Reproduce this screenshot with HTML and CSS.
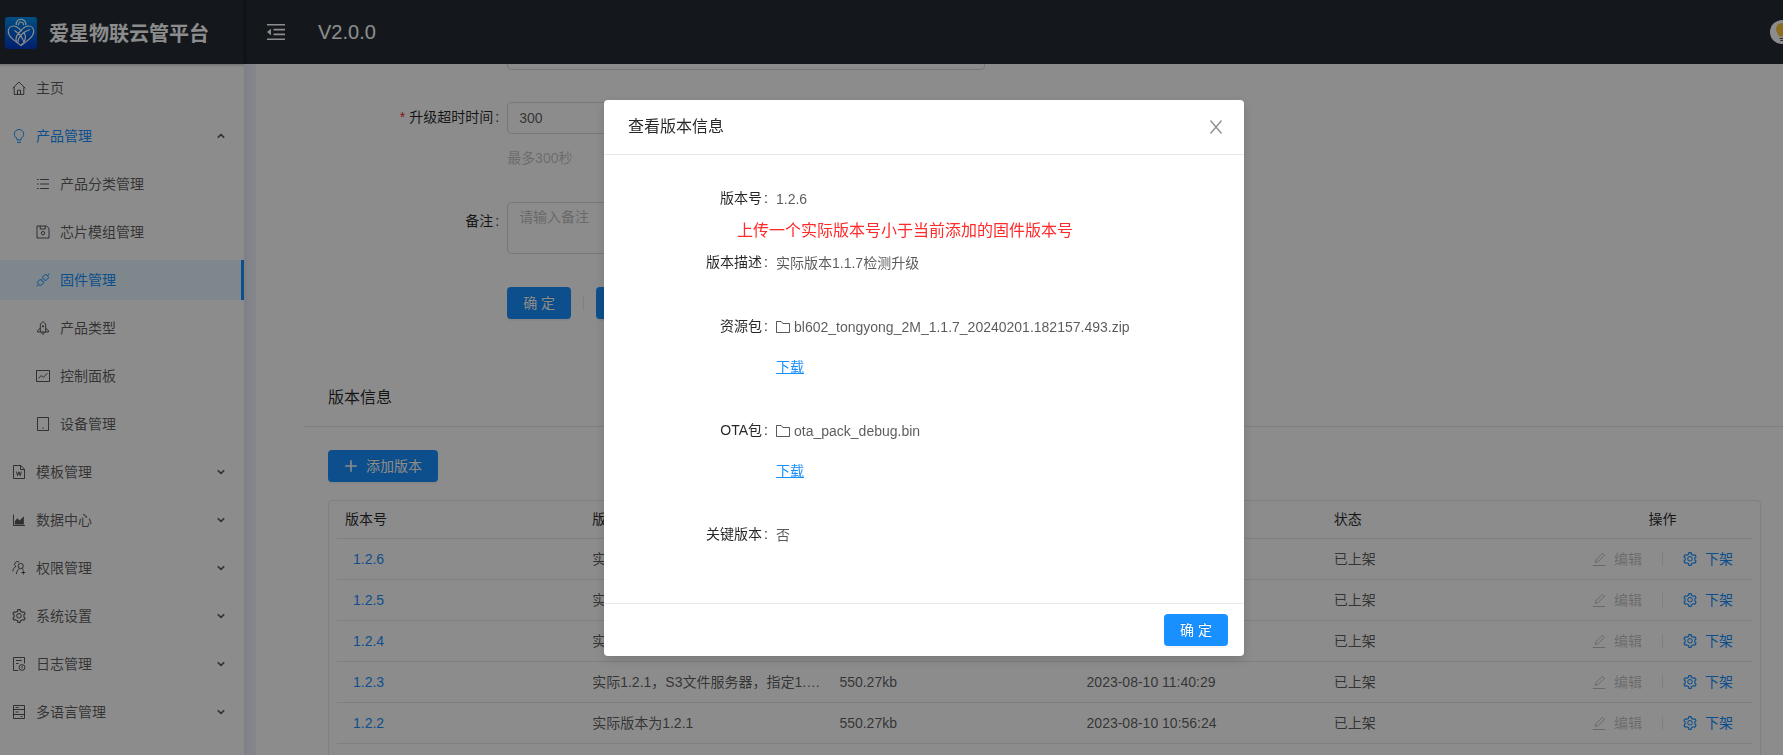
FILE: index.html
```html
<!DOCTYPE html>
<html lang="zh-CN">
<head>
<meta charset="utf-8">
<title>爱星物联云管平台</title>
<link rel="stylesheet" href="styles.css">
</head>
<body>
<svg class="sprite" aria-hidden="true">
  <symbol id="i-setting" viewBox="64 64 896 896"><path fill="currentColor" d="M924.8 625.7l-65.5-56c3.1-19 4.7-38.4 4.7-57.8s-1.6-38.8-4.7-57.8l65.5-56a32.03 32.03 0 0 0 9.3-35.2l-.9-2.6a443.74 443.74 0 0 0-79.7-137.9l-1.8-2.1a32.12 32.12 0 0 0-35.1-9.5l-81.3 28.9c-30-24.6-63.5-44-99.7-57.6l-15.7-85a32.05 32.05 0 0 0-25.8-25.7l-2.7-.5c-52.1-9.4-106.9-9.4-159 0l-2.7.5a32.05 32.05 0 0 0-25.8 25.7l-15.8 85.4a351.86 351.86 0 0 0-99 57.4l-81.9-29.1a32 32 0 0 0-35.1 9.5l-1.8 2.1a446.02 446.02 0 0 0-79.7 137.9l-.9 2.6c-4.5 12.5-.8 26.5 9.3 35.2l66.3 56.6c-3.1 18.8-4.6 38-4.6 57.1 0 19.2 1.5 38.4 4.6 57.1L99 625.5a32.03 32.03 0 0 0-9.3 35.2l.9 2.6c18.1 50.4 44.9 96.9 79.7 137.9l1.8 2.1a32.12 32.12 0 0 0 35.1 9.5l81.9-29.1c29.8 24.5 63.1 43.9 99 57.4l15.8 85.4a32.05 32.05 0 0 0 25.8 25.7l2.7.5a449.4 449.4 0 0 0 159 0l2.7-.5a32.05 32.05 0 0 0 25.8-25.7l15.7-85a350 350 0 0 0 99.7-57.6l81.3 28.9a32 32 0 0 0 35.1-9.5l1.8-2.1c34.8-41.1 61.6-87.5 79.7-137.9l.9-2.6c4.5-12.3.8-26.3-9.3-35zM788.3 465.9c2.5 15.1 3.8 30.6 3.8 46.1s-1.3 31-3.8 46.1l-6.6 40.1 74.7 63.9a370.03 370.03 0 0 1-42.6 73.6L721 702.8l-31.4 25.8c-23.9 19.6-50.5 35-79.3 45.8l-38.1 14.3-17.9 97a377.5 377.5 0 0 1-85 0l-17.9-97.2-37.8-14.5c-28.5-10.8-55-26.2-78.7-45.7l-31.4-25.9-93.4 33.2c-17-22.9-31.2-47.6-42.6-73.6l75.5-64.5-6.5-40c-2.4-14.9-3.7-30.3-3.7-45.5 0-15.3 1.2-30.6 3.7-45.5l6.5-40-75.5-64.5c11.3-26.1 25.6-50.7 42.6-73.6l93.4 33.2 31.4-25.9c23.7-19.5 50.2-34.9 78.7-45.7l37.9-14.3 17.9-97.2c28.1-3.2 56.8-3.2 85 0l17.9 97 38.1 14.3c28.7 10.8 55.4 26.2 79.3 45.8l31.4 25.8 92.8-32.9c17 22.9 31.2 47.6 42.6 73.6L781.8 426l6.5 39.9zM512 326c-97.2 0-176 78.8-176 176s78.8 176 176 176 176-78.8 176-176-78.8-176-176-176zm79.2 255.2A111.6 111.6 0 0 1 512 614c-29.9 0-58-11.7-79.2-32.8A111.6 111.6 0 0 1 400 502c0-29.9 11.7-58 32.8-79.2C454 401.6 482.1 390 512 390c29.9 0 58 11.6 79.2 32.8A111.6 111.6 0 0 1 624 502c0 29.9-11.7 58-32.8 79.2z"/></symbol>
  <symbol id="i-home" viewBox="0 0 14 14"><path class="ln" d="M.6 7.4 7 1l6.4 6.4M2.200 6.200v7.200h9.600V6.200M5.500 13.200V9.300h3v3.900"/></symbol>
  <symbol id="i-bulb" viewBox="0 0 14 14"><path class="ln" d="M5 11V9.400C3.400 8.600 2.300 7 2.300 5.200a4.700 4.700 0 0 1 9.400 0C11.700 7 10.600 8.600 9 9.400V11zM5 13.300h4"/></symbol>
  <symbol id="i-list" viewBox="0 0 14 14"><path class="ln" d="M4.200 2.500H13M4.200 7H13M4.200 11.500H13M1 2.500h1.600M1 7h1.600M1 11.500h1.600"/></symbol>
  <symbol id="i-save" viewBox="0 0 14 14"><path class="ln" d="M1 1h9.600L13 3.400V13H1zM4.200 1v3h5V1"/><circle class="ln" cx="7" cy="8.200" r="1.700"/></symbol>
  <symbol id="i-api" viewBox="0 0 14 14"><path class="ln" d="M6.300 4.200 8.300 2.200a2.500 2.500 0 0 1 3.500 3.500l-2 2zM4.200 6.300 2.200 8.300a2.500 2.500 0 0 0 3.500 3.500l2-2zM11.700 2.300l1.700-1.700M2.300 11.700l-1.700 1.700M5.200 7.200l1.500-1.500M6.800 8.800l1.500-1.500"/></symbol>
  <symbol id="i-rocket" viewBox="0 0 14 14"><path class="ln" d="M4.300 11V4.200C4.300 2.700 6 1.200 7 .6c1 .6 2.700 2.100 2.700 3.600V11zM4.300 7.200 1.600 9.500V11h2.700M9.700 7.200l2.700 2.300V11H9.700M5.600 11.200c0 1.200.8 1.900 1.400 2.200.6-.3 1.400-1 1.400-2.200"/><circle class="ln" cx="7" cy="5.300" r=".7"/></symbol>
  <symbol id="i-fund" viewBox="0 0 14 14"><path class="ln" d="M.5 1.500h13v11H.5zM2.500 9.500l2.700-3 2 2 4.200-4.300"/></symbol>
  <symbol id="i-tablet" viewBox="0 0 14 14"><path class="ln" d="M1.500.5h11v13h-11z"/><circle cx="7" cy="11.300" r=".7" fill="currentColor"/></symbol>
  <symbol id="i-word" viewBox="0 0 14 14"><path class="ln" d="M1.500.5h7.300L12.500 4.200v9.300h-11zM8.500.8v3.700h3.700M4.400 6.600l1.200 4 1.300-3.800 1.300 3.800 1.200-4"/></symbol>
  <symbol id="i-area" viewBox="0 0 14 14"><path class="ln" d="M1.500 1.500v11H13"/><path fill="currentColor" d="M2.800 11.400V8.200L5.300 5.300l2.300 2.300 4.300-4.400v8.200z"/></symbol>
  <symbol id="i-users" viewBox="0 0 14 14"><circle class="ln" cx="8.700" cy="5" r="2.600"/><path class="ln" d="M7.200 1.100A2.700 2.700 0 0 0 3.800 5.600C2.200 6.500 1 8 .8 10.400M4.400 13.200c.1-2.800 1.300-4.600 3-5.600M9.800 7.400c.9.400 1.400.9 1.800 1.500M9.300 11.500h4M11.300 9.500v4"/></symbol>
  <symbol id="i-log" viewBox="0 0 14 14"><path class="ln" d="M6.400 13.500H1.500V.5h11v6M4 3.500h5.800M4 6.500h2.600"/><circle class="ln" cx="10" cy="10.500" r="2.900"/><path class="ln" d="M10 8.900v1.800M10 11.300v.8"/></symbol>
  <symbol id="i-lang" viewBox="0 0 14 14"><path class="ln" d="M1.500.5h11v13h-11zM1.500 4.500h11M1.500 9.500h11M3.500 2.500h3M3.500 7h3M8.800 11.500h1.600"/></symbol>
  <symbol id="i-edit" viewBox="0 0 14 14"><path class="ln" d="M.8 13.500h12.400M3.400 10.300l.5-2.500L10.400 1.300l2 2-6.500 6.500z"/></symbol>
  <symbol id="i-folder" viewBox="0 0 14 14"><path class="ln" d="M.5 1.500h4.700l1.600 2h6.700v9H.5z"/></symbol>
  <symbol id="i-plus" viewBox="0 0 14 14"><path class="ln bold" d="M7 1.200v11.600M1.200 7h11.600"/></symbol>
  <symbol id="i-down" viewBox="0 0 8 8"><path class="ln bold" d="M.8 2.400 4 5.400l3.200-3"/></symbol>
  <symbol id="i-up" viewBox="0 0 8 8"><path class="ln bold" d="M.8 5.600 4 2.600l3.200 3"/></symbol>
  <symbol id="i-close" viewBox="0 0 16 16"><path class="ln close-x" d="M2.500 1.500 13.500 14.500M13.500 1.500 2.500 14.500"/></symbol>
  <symbol id="i-fold" viewBox="0 0 18 18"><path class="ln bold" d="M0 1.700h18M6.500 6.600H18M6.500 11.400H18M0 16.300h18"/><path fill="currentColor" d="M0 9l4-3.200v6.400z"/></symbol>
</svg>

<div class="app">
  <header class="topbar">
    <div class="brand">
      <svg class="logo" viewBox="0 0 32 32" aria-hidden="true">
        <defs><linearGradient id="lg" x1="0" y1="0" x2="0" y2="1"><stop offset="0" stop-color="#0090f0"/><stop offset="1" stop-color="#0038c8"/></linearGradient></defs>
        <rect width="32" height="32" rx="3" fill="url(#lg)"/>
        <g fill="none" stroke="#fff" stroke-width="1.200">
          <path d="M16 28.500C9 23.500 3.300 19.500 3.300 14.500c0-3.400 2.400-5.500 5.200-5.500 3.200 0 5.600 2.200 7.500 4.800 1.900-2.600 4.300-4.800 7.500-4.800 2.800 0 5.200 2.100 5.200 5.500 0 5-5.700 9-12.700 14z"/>
          <path d="M16 13.800c-4.500 3.700-6 7-4.600 11M16 28.500c4.500-3.500 5.500-9 3.300-12.500M12.800 26c.2-6 4-10.500 12-13.500M9.500 13.500c5 3 8.500 7.500 9.500 12.500M11.300 8a4.800 4.800 0 1 1 9.400 0M13.600 8.200a2.500 2.500 0 1 1 4.800 0"/>
        </g>
      </svg>
      <h1 class="brand-name">爱星物联云管平台</h1>
    </div>
    <button class="fold" type="button" aria-label="收起菜单"><svg width="18" height="18"><use href="#i-fold"/></svg></button>
    <span class="version">V2.0.0</span>
    <svg class="avatar" viewBox="0 0 24 24" aria-hidden="true"><circle cx="12" cy="12" r="12" fill="#fff"/><path d="M9 16.500C8.700 14 6 12.500 6 8.900a6 6 0 0 1 12 0c0 3.600-2.700 5.100-3 7.600z" fill="#ffc53d"/><path d="M9.500 18h5v1h-5zM10.300 20h3.400v1h-3.400z" fill="#555"/></svg>
  </header>

  <nav class="sider">
    <ul class="menu">
      <li><a class="item" href="#"><svg class="ic"><use href="#i-home"/></svg><span>主页</span></a></li>
      <li><a class="item open" href="#"><svg class="ic"><use href="#i-bulb"/></svg><span>产品管理</span><svg class="arrow"><use href="#i-up"/></svg></a>
        <ul class="menu sub">
          <li><a class="item" href="#"><svg class="ic"><use href="#i-list"/></svg><span>产品分类管理</span></a></li>
          <li><a class="item" href="#"><svg class="ic"><use href="#i-save"/></svg><span>芯片模组管理</span></a></li>
          <li><a class="item selected" href="#"><svg class="ic"><use href="#i-api"/></svg><span>固件管理</span></a></li>
          <li><a class="item" href="#"><svg class="ic"><use href="#i-rocket"/></svg><span>产品类型</span></a></li>
          <li><a class="item" href="#"><svg class="ic"><use href="#i-fund"/></svg><span>控制面板</span></a></li>
          <li><a class="item" href="#"><svg class="ic"><use href="#i-tablet"/></svg><span>设备管理</span></a></li>
        </ul>
      </li>
      <li><a class="item" href="#"><svg class="ic"><use href="#i-word"/></svg><span>模板管理</span><svg class="arrow"><use href="#i-down"/></svg></a></li>
      <li><a class="item" href="#"><svg class="ic"><use href="#i-area"/></svg><span>数据中心</span><svg class="arrow"><use href="#i-down"/></svg></a></li>
      <li><a class="item" href="#"><svg class="ic"><use href="#i-users"/></svg><span>权限管理</span><svg class="arrow"><use href="#i-down"/></svg></a></li>
      <li><a class="item" href="#"><svg class="ic"><use href="#i-setting"/></svg><span>系统设置</span><svg class="arrow"><use href="#i-down"/></svg></a></li>
      <li><a class="item" href="#"><svg class="ic"><use href="#i-log"/></svg><span>日志管理</span><svg class="arrow"><use href="#i-down"/></svg></a></li>
      <li><a class="item" href="#"><svg class="ic"><use href="#i-lang"/></svg><span>多语言管理</span><svg class="arrow"><use href="#i-down"/></svg></a></li>
    </ul>
  </nav>

  <main class="content">
    <form class="form">
      <div class="row first"><span class="label"></span><div class="field"><input class="input" type="text" aria-label="升级次数"></div></div>
      <div class="row"><label class="label required" for="timeout">升级超时时间</label><div class="field"><input class="input" id="timeout" type="text" value="300"><span class="help">最多300秒</span></div></div>
      <div class="row"><label class="label" for="remark">备注</label><div class="field"><textarea class="textarea" id="remark" placeholder="请输入备注"></textarea></div></div>
      <div class="row actions"><span class="label"></span><div class="buttons"><button class="btn" type="button">确 定</button><i class="divider"></i><button class="btn" type="button">返 回</button></div></div>
    </form>

    <section class="card">
      <h2 class="card-head">版本信息</h2>
      <div class="card-body">
        <button class="btn add" type="button"><svg class="ic"><use href="#i-plus"/></svg>添加版本</button>
        <div class="table-box">
          <table class="table">
            <colgroup><col><col><col><col><col><col class="col-ops"></colgroup>
            <thead><tr><th>版本号</th><th>版本描述</th><th>大小</th><th>创建时间</th><th>状态</th><th class="center">操作</th></tr></thead>
            <tbody>
              <tr><td><a class="ver" href="#">1.2.6</a></td><td>实际版本1.1.7检测升级</td><td>550.27kb</td><td></td><td>已上架</td><td><div class="ops"><button class="op" type="button" disabled><svg class="ic"><use href="#i-edit"/></svg>编辑</button><i class="divider"></i><button class="op" type="button"><svg class="ic"><use href="#i-setting"/></svg>下架</button></div></td></tr>
              <tr><td><a class="ver" href="#">1.2.5</a></td><td>实际版本</td><td>550.27kb</td><td></td><td>已上架</td><td><div class="ops"><button class="op" type="button" disabled><svg class="ic"><use href="#i-edit"/></svg>编辑</button><i class="divider"></i><button class="op" type="button"><svg class="ic"><use href="#i-setting"/></svg>下架</button></div></td></tr>
              <tr><td><a class="ver" href="#">1.2.4</a></td><td>实际版本</td><td>550.27kb</td><td></td><td>已上架</td><td><div class="ops"><button class="op" type="button" disabled><svg class="ic"><use href="#i-edit"/></svg>编辑</button><i class="divider"></i><button class="op" type="button"><svg class="ic"><use href="#i-setting"/></svg>下架</button></div></td></tr>
              <tr><td><a class="ver" href="#">1.2.3</a></td><td>实际1.2.1，S3文件服务器，指定1.2.1版本</td><td>550.27kb</td><td>2023-08-10 11:40:29</td><td>已上架</td><td><div class="ops"><button class="op" type="button" disabled><svg class="ic"><use href="#i-edit"/></svg>编辑</button><i class="divider"></i><button class="op" type="button"><svg class="ic"><use href="#i-setting"/></svg>下架</button></div></td></tr>
              <tr><td><a class="ver" href="#">1.2.2</a></td><td>实际版本为1.2.1</td><td>550.27kb</td><td>2023-08-10 10:56:24</td><td>已上架</td><td><div class="ops"><button class="op" type="button" disabled><svg class="ic"><use href="#i-edit"/></svg>编辑</button><i class="divider"></i><button class="op" type="button"><svg class="ic"><use href="#i-setting"/></svg>下架</button></div></td></tr>
            </tbody>
          </table>
        </div>
      </div>
    </section>
  </main>
</div>

<div class="mask">
  <div class="modal" role="dialog" aria-modal="true" aria-labelledby="modal-title">
    <div class="modal-head"><h2 class="modal-title" id="modal-title">查看版本信息</h2><button class="close" type="button" aria-label="关闭"><svg width="16" height="16"><use href="#i-close"/></svg></button></div>
    <div class="modal-body">
      <dl class="info">
        <dt>版本号</dt><dd>1.2.6</dd>
        <dt>版本描述</dt><dd>实际版本1.1.7检测升级</dd>
        <dt>资源包</dt><dd><span class="file"><svg class="ic"><use href="#i-folder"/></svg>bl602_tongyong_2M_1.1.7_20240201.182157.493.zip</span><a class="download" href="#">下载</a></dd>
        <dt>OTA包</dt><dd><span class="file"><svg class="ic"><use href="#i-folder"/></svg>ota_pack_debug.bin</span><a class="download" href="#">下载</a></dd>
        <dt>关键版本</dt><dd>否</dd>
      </dl>
      <p class="note">上传一个实际版本号小于当前添加的固件版本号</p>
    </div>
    <div class="modal-foot"><button class="btn" type="button">确 定</button></div>
  </div>
</div>
</body>
</html>
```

FILE: styles.css
```css
* {
  box-sizing: border-box;
}

body {
  margin: 0;
  font: 14px/21px "Liberation Sans", Arial, "Noto Sans CJK SC", sans-serif;
  color: rgba(0, 0, 0, 0.65);
  background: #f0f4ff;
}

h1, h2, p, ul, dl, dd {
  margin: 0;
  padding: 0;
}

ul {
  list-style: none;
}

a {
  color: #1890ff;
  text-decoration: none;
}

button, input, textarea {
  font: inherit;
  color: inherit;
}

svg {
  display: block;
  flex: none;
}

.sprite {
  position: absolute;
  width: 0;
  height: 0;
}

.ln {
  fill: none;
  stroke: currentColor;
  stroke-width: 1;
}

.bold {
  stroke-width: 1.6;
}

.close-x {
  stroke-width: 1.3;
}

.ic {
  width: 14px;
  height: 14px;
}

.app {
  display: grid;
  grid-template: 64px 1fr / 244px 1fr;
  height: 100vh;
  overflow: hidden;
}

/* Top bar */
.topbar {
  grid-column: 1 / -1;
  display: flex;
  align-items: center;
  overflow: hidden;
  background: #262d35;
  color: #fff;
}

.brand {
  display: flex;
  align-items: center;
  gap: 12px;
  width: 244px;
  height: 64px;
  padding: 2px 0 0 5px;
  box-shadow: 1px 0 4px rgba(0, 0, 0, 0.5);
}

.logo {
  width: 32px;
  height: 32px;
}

.brand-name {
  padding-top: 2px;
  font-size: 20px;
  line-height: 30px;
  font-weight: 700;
}

.fold {
  margin-left: 23px;
  padding: 0;
  border: 0;
  background: none;
}

.version {
  margin-left: 33px;
  font-size: 20px;
  line-height: 30px;
}

.avatar {
  width: 24px;
  height: 24px;
  margin: 0 -11px 0 auto;
}

/* Side menu */
.sider {
  z-index: 1;
  overflow: hidden;
  background: linear-gradient(#d0d0d0, #fff 3px);
  box-shadow: 2px 0 8px rgba(29, 35, 41, 0.08);
}

.menu {
  display: grid;
  gap: 8px;
  padding-top: 4px;
}

.sub {
  padding-top: 8px;
}

.item {
  display: flex;
  align-items: center;
  gap: 10px;
  height: 40px;
  padding: 0 19px 0 12px;
  color: rgba(0, 0, 0, 0.65);
}

.sub .item {
  padding-left: 36px;
}

.arrow {
  width: 8px;
  height: 8px;
  margin-left: auto;
  color: rgba(0, 0, 0, 0.65);
}

.item.open {
  color: #1890ff;
}

.item.selected {
  color: #1890ff;
  background: #e6f7ff;
  border-right: 3px solid #1890ff;
}

/* Content */
.content {
  margin-left: 12px;
  padding-left: 48px;
  overflow: hidden;
  background: #fff;
}

.form {
  display: grid;
  gap: 24px;
  padding: 0 22px 0 24px;
}

.row {
  display: grid;
  grid-template-columns: 12.5% 33.333% 1fr;
}

.row.first {
  margin-top: -30px;
}

.label {
  padding-right: 8px;
  line-height: 38px;
  text-align: right;
  color: rgba(0, 0, 0, 0.85);
}

label.label::after,
.info dt::after {
  content: ":";
  margin-left: 2px;
}

.required::before {
  content: "*";
  margin-right: 4px;
  color: #f5222d;
}

.field {
  min-height: 40px;
}

.input,
.textarea {
  display: block;
  width: 100%;
  border: 1px solid #d9d9d9;
  border-radius: 4px;
  background: #fff;
}

.input {
  height: 32px;
  margin: 4px 0;
  padding: 4px 11px;
}

.textarea {
  height: 52px;
  padding: 4px 11px;
  resize: none;
}

.textarea::placeholder {
  color: #bfbfbf;
}

.help {
  display: block;
  line-height: 40px;
  color: rgba(0, 0, 0, 0.25);
}

.actions {
  padding-top: 9px;
}

.buttons {
  display: flex;
  align-items: center;
  gap: 12px;
}

.btn {
  height: 32px;
  padding: 0 16px;
  border: 0;
  border-radius: 4px;
  background: #1890ff;
  color: #fff;
  white-space: nowrap;
  text-shadow: 0 -1px 0 rgba(0, 0, 0, 0.12);
  box-shadow: 0 2px 0 rgba(0, 0, 0, 0.045);
}

.divider {
  width: 1px;
  height: 14px;
  background: #e8e8e8;
}

.card {
  margin-top: 51px;
}

.card-head {
  padding: 16px 24px;
  border-bottom: 1px solid #e8e8e8;
  font-size: 16px;
  line-height: 24px;
  font-weight: 400;
  color: rgba(0, 0, 0, 0.85);
}

.card-body {
  padding: 23px 22px 24px 24px;
}

.add {
  display: flex;
  align-items: center;
  gap: 8px;
}

.table-box {
  margin-top: 18px;
  padding: 0 8px 40px;
  border: 1px solid #e8e8e8;
  border-radius: 4px;
}

.table {
  width: 100%;
  table-layout: fixed;
  border-collapse: separate;
  border-spacing: 0;
}

.col-ops {
  width: 179px;
}

.table th,
.table td {
  padding: 8px;
  border-bottom: 1px solid #e8e8e8;
  text-align: left;
  overflow: hidden;
  text-overflow: ellipsis;
  white-space: nowrap;
}

.table th {
  font-weight: 400;
  color: rgba(0, 0, 0, 0.85);
}

.table td {
  height: 41px;
}

.table th.center {
  text-align: center;
}

.ver {
  padding-left: 8px;
}

.ops {
  display: flex;
  align-items: center;
  justify-content: center;
  gap: 20px;
}

.op {
  display: flex;
  align-items: center;
  gap: 8px;
  padding: 0;
  border: 0;
  background: none;
  color: #1890ff;
}

.op:disabled {
  color: rgba(0, 0, 0, 0.25);
}

/* Dialog */
.mask {
  position: fixed;
  inset: 0;
  z-index: 10;
  padding: 100px 0 0 65px;
  background: rgba(0, 0, 0, 0.45);
}

.modal {
  width: 640px;
  margin: 0 auto;
  border-radius: 4px;
  background: #fff;
  box-shadow: 0 4px 12px rgba(0, 0, 0, 0.15);
}

.modal-head {
  display: flex;
  align-items: center;
  justify-content: space-between;
  padding: 15px 20px 15px 24px;
  border-bottom: 1px solid #e8e8e8;
}

.modal-title {
  font-size: 16px;
  line-height: 24px;
  font-weight: 400;
  color: rgba(0, 0, 0, 0.85);
}

.close {
  padding: 0;
  border: 0;
  background: none;
  color: rgba(0, 0, 0, 0.45);
}

.modal-body {
  position: relative;
  padding: 24px 24px 48px;
}

.info {
  display: grid;
  grid-template-columns: 25% 1fr;
  row-gap: 24px;
  line-height: 40px;
}

.info dt {
  padding-right: 8px;
  line-height: 38px;
  text-align: right;
  color: rgba(0, 0, 0, 0.85);
}

.file {
  display: flex;
  align-items: center;
  gap: 4px;
}

.download {
  text-decoration: underline;
}

.note {
  position: absolute;
  top: 64px;
  left: 133px;
  font-size: 16px;
  line-height: 24px;
  color: #ff2a2a;
}

.modal-foot {
  display: flex;
  justify-content: flex-end;
  padding: 10px 16px;
  border-top: 1px solid #e8e8e8;
}
```
